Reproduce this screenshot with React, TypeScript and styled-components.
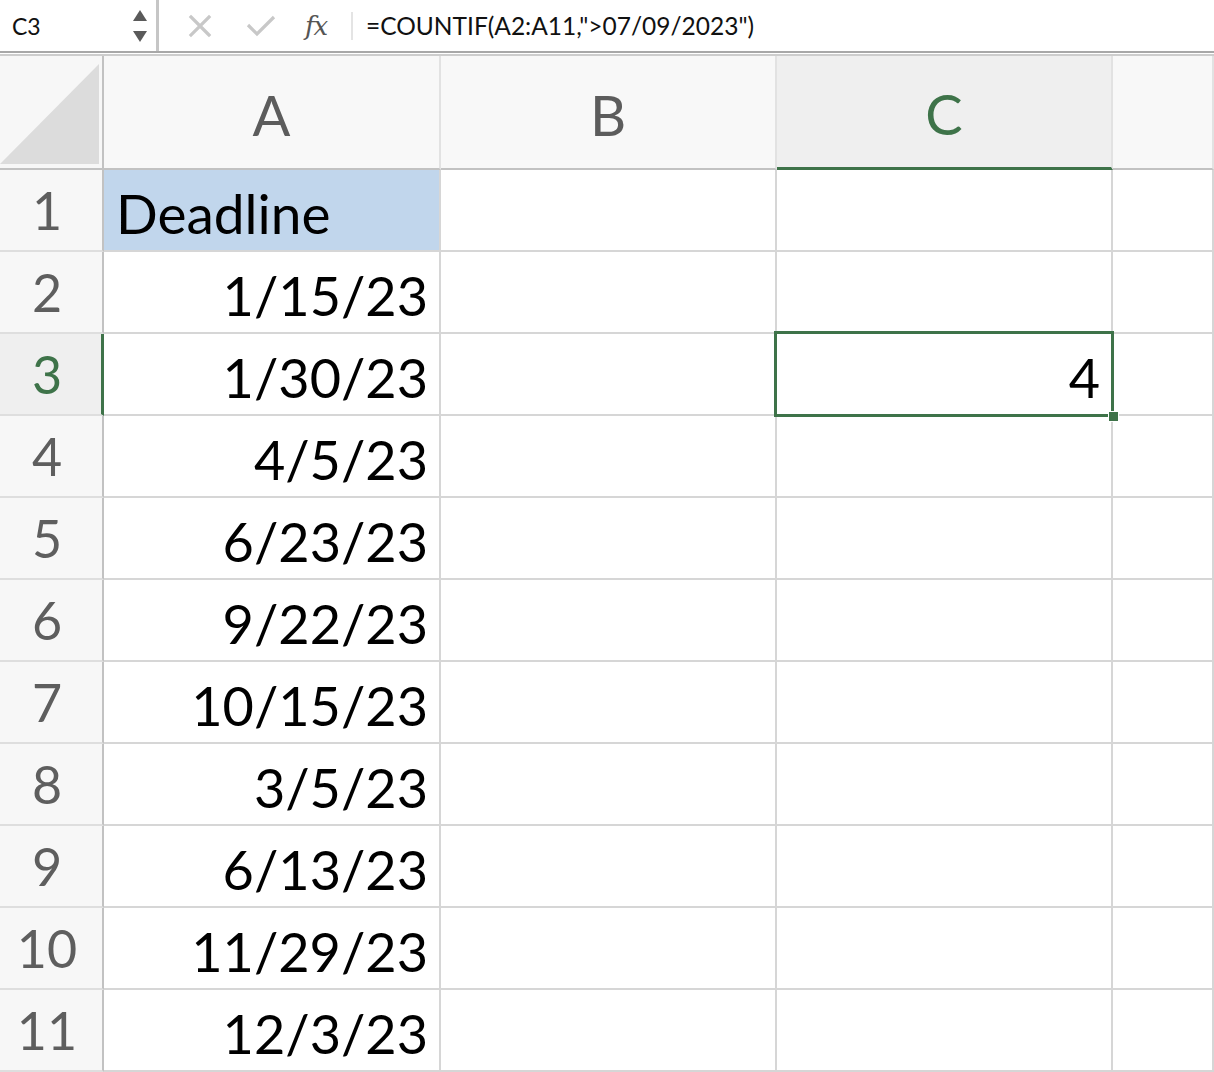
import React from "react";
import styled, { createGlobalStyle, css } from "styled-components";

const GREEN = "#3e7349";

const Global = createGlobalStyle`
  html, body { margin: 0; padding: 0; background: #fff; overflow: hidden; }
  body { font-family: Lato, "Open Sans", sans-serif; }
`;

const Page = styled.div`
  width: 1214px;
  height: 1072px;
  display: flex;
  flex-direction: column;
  overflow: hidden;
  background: #fff;
`;

const FormulaBar = styled.div`
  height: 51px;
  display: flex;
  align-items: center;
  border-bottom: 2px solid #a8a8a8;
  flex-shrink: 0;
`;

const NameBox = styled.div`
  width: 159px;
  height: 100%;
  box-sizing: border-box;
  border-right: 3px solid #c6c6c6;
  display: flex;
  align-items: center;
  justify-content: space-between;
  padding: 0 9px 0 12px;
  font-size: 23px;
  color: #111;
`;

const Spinner = styled.div`
  display: flex;
  flex-direction: column;
  gap: 10px;
  padding-top: 1px;
`;

const Tri = styled.div<{ $down?: boolean }>`
  width: 0;
  height: 0;
  border-left: 7px solid transparent;
  border-right: 7px solid transparent;
  ${(p) =>
    p.$down
      ? css`border-top: 11px solid #5a5a5a;`
      : css`border-bottom: 11px solid #5a5a5a;`}
`;

const Tools = styled.div`
  display: flex;
  align-items: center;
  height: 100%;
  padding-left: 29px;
`;

const IconSlot = styled.div<{ $w: number }>`
  width: ${(p) => p.$w}px;
  display: flex;
  align-items: center;
`;

const Fx = styled.span`
  font-family: "DejaVu Serif", "Liberation Serif", serif;
  font-style: italic;
  font-size: 26px;
  color: #555;
  letter-spacing: -1px;
`;

const Sep = styled.div`
  width: 2px;
  height: 28px;
  background: #e4e4e4;
  margin-left: 11px;
`;

const FormulaText = styled.div`
  padding-left: 13px;
  font-size: 24.5px;
  color: #111;
  white-space: nowrap;
`;

const Gap = styled.div`
  height: 1px;
  flex-shrink: 0;
`;

const Grid = styled.div`
  flex: 1;
  display: grid;
  grid-template-columns: 104px 337px 336px 336px 1fr;
  grid-template-rows: 114px repeat(11, 82px);
  border-top: 2px solid #cdcdcd;
  overflow: hidden;
`;

const Corner = styled.div`
  background: #f7f7f7;
  border-right: 2px solid #c2c2c2;
  border-bottom: 2px solid #c2c2c2;
  box-sizing: border-box;
  padding: 8px 3px 4px 0;
  display: flex;
`;

const CornerTri = styled.div`
  flex: 1;
  background: #dcdcdc;
  clip-path: polygon(0 100%, 100% 0, 100% 100%);
`;

const ColHead = styled.div<{ $active?: boolean }>`
  box-sizing: border-box;
  background: ${(p) => (p.$active ? "#efefef" : "#f8f8f8")};
  border-right: 2px solid #e2e2e2;
  border-bottom: ${(p) => (p.$active ? `3px solid ${GREEN}` : "2px solid #c2c2c2")};
  display: flex;
  align-items: center;
  justify-content: center;
  padding-top: 4px;
  font-size: 56px;
  color: ${(p) => (p.$active ? GREEN : "#5c5c5c")};
`;

const RowHead = styled.div<{ $active?: boolean }>`
  box-sizing: border-box;
  background: ${(p) => (p.$active ? "#efefef" : "#f7f7f7")};
  border-right: ${(p) => (p.$active ? `3px solid ${GREEN}` : "2px solid #c2c2c2")};
  border-bottom: 2px solid #dedede;
  display: flex;
  align-items: center;
  justify-content: center;
  padding-right: ${(p) => (p.$active ? "7px" : "8px")};
  font-size: 52px;
  color: ${(p) => (p.$active ? GREEN : "#5e5e5e")};
`;

const Cell = styled.div<{ $align?: "left" | "right"; $fill?: boolean; $label?: boolean; $selected?: boolean }>`
  box-sizing: border-box;
  position: relative;
  background: ${(p) => (p.$fill ? "#c1d6ec" : "#fff")};
  border-right: 2px solid #d6d6d6;
  border-bottom: 2px solid #d6d6d6;
  display: flex;
  align-items: center;
  justify-content: ${(p) => (p.$align === "left" ? "flex-start" : "flex-end")};
  padding: 6px 11px 0 12px;
  font-size: ${(p) => (p.$label ? "55px" : "54px")};
  color: #000;
  white-space: nowrap;
  ${(p) =>
    p.$selected &&
    css`
      z-index: 2;
      &::after {
        content: "";
        position: absolute;
        top: -3px;
        left: -3px;
        right: -3px;
        bottom: -3px;
        border: 3px solid ${GREEN};
        pointer-events: none;
      }
    `}
`;

const FillHandle = styled.div`
  position: absolute;
  right: -8px;
  bottom: -8px;
  width: 9px;
  height: 9px;
  background: ${GREEN};
  border: 1px solid #fff;
  z-index: 3;
`;

const XIcon = () => (
  <svg width="24" height="24" viewBox="0 0 24 24">
    <path d="M3 3 L21 21 M21 3 L3 21" stroke="#c8c8c8" strokeWidth="3.2" fill="none" strokeLinecap="square" />
  </svg>
);

const CheckIcon = () => (
  <svg width="30" height="24" viewBox="0 0 30 24">
    <path d="M2 11 L11 20 L28 3" stroke="#c8c8c8" strokeWidth="3.2" fill="none" />
  </svg>
);

const dates = [
  "1/15/23",
  "1/30/23",
  "4/5/23",
  "6/23/23",
  "9/22/23",
  "10/15/23",
  "3/5/23",
  "6/13/23",
  "11/29/23",
  "12/3/23",
];

export default function App() {
  const rows: React.ReactNode[] = [];
  for (let r = 1; r <= 11; r++) {
    const active = r === 3;
    rows.push(
      <React.Fragment key={r}>
        <RowHead $active={active}>{r}</RowHead>
        {r === 1 ? (
          <Cell $align="left" $fill $label>
            Deadline
          </Cell>
        ) : (
          <Cell>{dates[r - 2]}</Cell>
        )}
        <Cell />
        {active ? (
          <Cell $selected>
            4
            <FillHandle />
          </Cell>
        ) : (
          <Cell />
        )}
        <Cell />
      </React.Fragment>
    );
  }

  return (
    <Page>
      <Global />
      <FormulaBar>
        <NameBox>
          <span>C3</span>
          <Spinner>
            <Tri />
            <Tri $down />
          </Spinner>
        </NameBox>
        <Tools>
          <IconSlot $w={58}>
            <XIcon />
          </IconSlot>
          <IconSlot $w={59}>
            <CheckIcon />
          </IconSlot>
          <IconSlot $w={35}>
            <Fx>fx</Fx>
          </IconSlot>
          <Sep />
        </Tools>
        <FormulaText>=COUNTIF(A2:A11,"&gt;07/09/2023")</FormulaText>
      </FormulaBar>
      <Gap />
      <Grid>
        <Corner>
          <CornerTri />
        </Corner>
        <ColHead>A</ColHead>
        <ColHead>B</ColHead>
        <ColHead $active>C</ColHead>
        <ColHead />
        {rows}
      </Grid>
    </Page>
  );
}
